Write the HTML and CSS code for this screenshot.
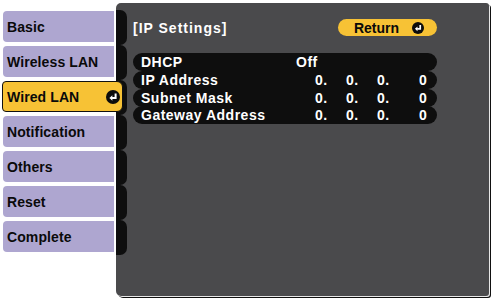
FILE: index.html
```html
<!DOCTYPE html>
<html>
<head>
<meta charset="utf-8">
<link rel="stylesheet" href="styles.css">
</head>
<body>
<div class="screen">
  <nav class="tabs">
    <div class="tab">Basic</div>
    <div class="tab">Wireless LAN</div>
    <div class="tab tab-active">Wired LAN
      <svg class="enter" viewBox="0 0 14 14" width="14" height="14"><circle cx="7" cy="7" r="7" fill="#0c0c0c"/><path d="M9.6 3.6 V8 H6" stroke="#fff" stroke-width="2" fill="none"/><path d="M3.4 8 L6.4 5.2 V10.8 Z" fill="#fff"/></svg>
    </div>
    <div class="tab">Notification</div>
    <div class="tab">Others</div>
    <div class="tab">Reset</div>
    <div class="tab">Complete</div>
  </nav>
  <section class="panel">
    <div class="strip">
      <span></span><span></span><span></span><span></span><span></span><span></span><span></span>
    </div>
    <div class="main">
      <div class="head">
        <div class="title">[IP Settings]</div>
        <div class="return">Return
          <svg class="enter-sm" viewBox="0 0 14 14" width="12" height="12"><circle cx="7" cy="7" r="7" fill="#0c0c0c"/><path d="M9.6 3.6 V8 H6" stroke="#fff" stroke-width="2" fill="none"/><path d="M3.4 8 L6.4 5.2 V10.8 Z" fill="#fff"/></svg>
        </div>
      </div>
      <div class="rows">
        <div class="row"><span class="label">DHCP</span><span class="val">Off</span></div>
        <div class="row"><span class="label">IP Address</span><span class="ip"><span>0.</span><span>0.</span><span>0.</span><span>0</span></span></div>
        <div class="row"><span class="label">Subnet Mask</span><span class="ip"><span>0.</span><span>0.</span><span>0.</span><span>0</span></span></div>
        <div class="row"><span class="label">Gateway Address</span><span class="ip"><span>0.</span><span>0.</span><span>0.</span><span>0</span></span></div>
      </div>
    </div>
  </section>
</div>
</body>
</html>
```
FILE: styles.css
```css
html, body {
  margin: 0;
  padding: 0;
  background: #fff;
}
body {
  width: 493px;
  height: 302px;
  overflow: hidden;
  font-family: "Liberation Sans", Arial, sans-serif;
  font-weight: bold;
  font-size: 14px;
}
.screen {
  display: flex;
  padding: 3px 0 0 3px;
}
.tabs {
  display: flex;
  flex-direction: column;
  gap: 4px;
  width: 111px;
  padding-top: 8px;
  margin-right: 2px;
  position: relative;
  z-index: 2;
}
.tab {
  height: 31px;
  box-sizing: border-box;
  background: #aea6d0;
  border-radius: 4px 0 0 4px;
  color: #0a0a0a;
  display: flex;
  align-items: center;
  padding-left: 4px;
  letter-spacing: 0.1px;
}
.tab-active {
  background: #f7c235;
  border: 1px solid #111;
  border-radius: 4px 6px 6px 4px;
  margin-right: -9px;
  margin-left: -1px;
  padding-left: 4px;
  justify-content: space-between;
  padding-right: 2px;
}
.enter { display: block; }
.panel {
  width: 373px;
  height: 293px;
  background: #4a4a4c;
  border-radius: 5px 3px 3px 5px;
  box-shadow: 1px 1px 0 0 #e8e8e8, 2px 2px 0 0 #111;
  display: flex;
}
.strip {
  width: 11px;
  padding-top: 7px;
  display: flex;
  flex-direction: column;
}
.strip span {
  height: 35px;
  background: #0e0e0e;
  border-radius: 0 7px 7px 0;
}
.main {
  padding: 16px 0 0 6px;
  width: 304px;
  color: #fff;
}
.head {
  display: flex;
  justify-content: space-between;
  align-items: center;
  height: 17px;
}
.title {
  letter-spacing: 1px;
}
.return {
  width: 99px;
  height: 17px;
  box-sizing: border-box;
  background: #f7c235;
  border-radius: 9px;
  color: #0a0a0a;
  display: flex;
  align-items: center;
  justify-content: flex-end;
  gap: 13px;
  padding-right: 13px;
  letter-spacing: 0;
}
.enter-sm { display: block; }
.rows {
  margin-top: 17px;
  display: flex;
  flex-direction: column;
}
.row {
  height: 18px;
  margin-bottom: -0.25px;
  background: #0e0e0e;
  border-radius: 9px;
  display: flex;
  align-items: center;
  padding-left: 8px;
  letter-spacing: 0.5px;
}
.label {
  width: 155px;
}
.ip {
  display: grid;
  grid-template-columns: 31px 31px 42px auto;
  margin-left: 19px;
}
```
